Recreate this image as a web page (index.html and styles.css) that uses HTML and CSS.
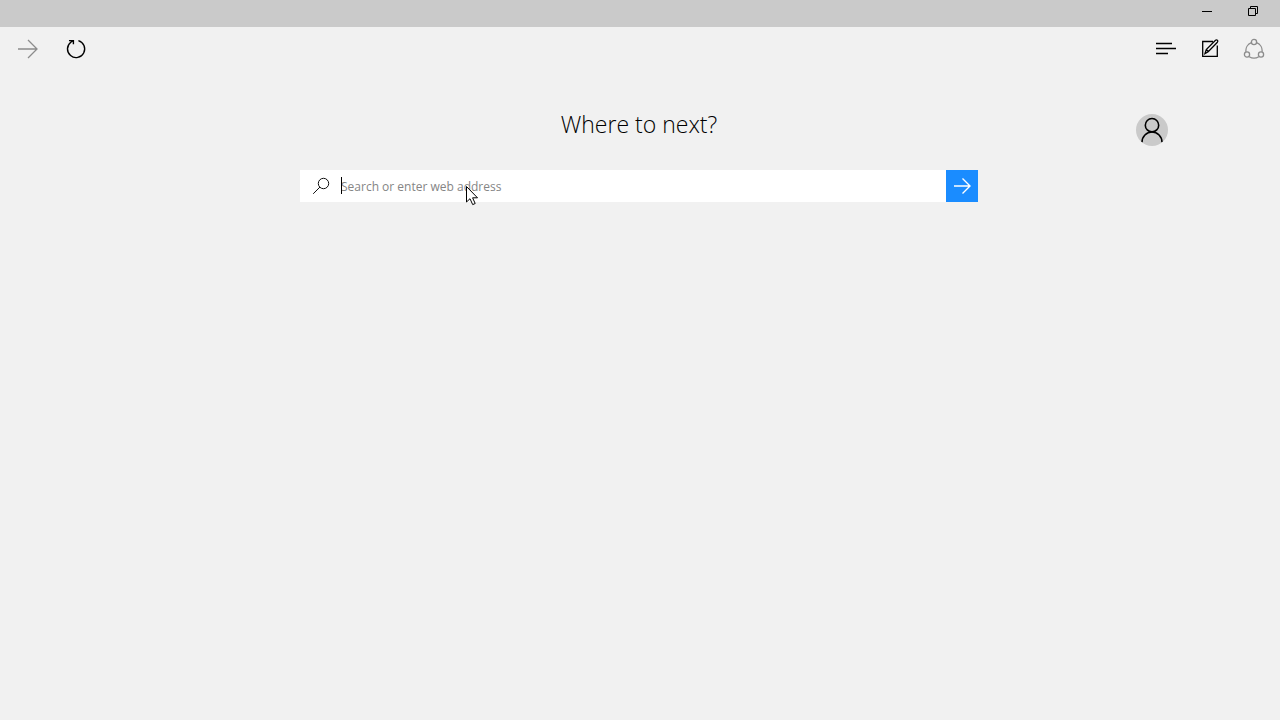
FILE: index.html
```html
<!DOCTYPE html>
<html lang="en">
<head>
<meta charset="utf-8">
<meta name="viewport" content="width=device-width, initial-scale=1">
<title>New tab</title>
<link rel="stylesheet" href="styles.css">
</head>
<body>
<header>
  <div class="titlebar">
    <button class="window-button" type="button" aria-label="Minimize">
      <svg width="12" height="12" viewBox="0 0 12 12"><path d="M1 6.500h10"/></svg>
    </button>
    <button class="window-button" type="button" aria-label="Restore">
      <svg width="12" height="12" viewBox="0 0 12 12"><path d="M1.500 3.500h7v7h-7zM3.500 3.500v-2h7v7h-2"/></svg>
    </button>
  </div>
  <nav class="toolbar" aria-label="Browser">
    <div class="nav-group">
      <button class="nav-button muted" type="button" aria-label="Forward">
        <svg width="22" height="22" viewBox="0 0 22 22"><path stroke-width="1.300" d="M1 11h19M11 2l9 9-9 9"/></svg>
      </button>
      <button class="nav-button" type="button" aria-label="Refresh">
        <svg width="22" height="22" viewBox="0 0 22 22"><path stroke-width="1.400" d="M13.400 2.700A8.600 8.600 0 1 1 5.800 4.200L8 2.700M4 2.600h4.400v3.600"/></svg>
      </button>
    </div>
    <div class="tool-group">
      <button class="tool-button" type="button" aria-label="Hub">
        <svg width="22" height="22" viewBox="0 0 22 22"><path stroke-width="1.400" d="M1 5.500h16M1 10.500h20M1 15.500h12"/></svg>
      </button>
      <button class="tool-button" type="button" aria-label="Make a web note">
        <svg width="22" height="22" viewBox="0 0 22 22"><path stroke-width="1.300" d="M14 3.500H3.700v14.800h14.600V7.500M6 15.500l1.300-4L16.500 2.300q1-.8 1.900 0t0 1.900L9.200 13.700zM7.300 11.500l2.200 2.100"/></svg>
      </button>
      <button class="tool-button muted" type="button" aria-label="Share">
        <svg width="22" height="22" viewBox="0 0 22 22"><g stroke-width="1.300"><circle cx="11" cy="4" r="2.600"/><circle cx="4" cy="16.500" r="2.600"/><circle cx="18" cy="16.500" r="2.600"/><path d="M8.400 4.700A8.500 8.500 0 0 0 3 13.900M13.600 4.700A8.500 8.500 0 0 1 19 13.900M6.200 18.700a9 9 0 0 0 9.600 0"/></g></svg>
      </button>
    </div>
  </nav>
</header>
<main class="start">
  <div class="start-center">
    <h1>Where to next?</h1>
    <form class="search" role="search">
      <label class="search-icon" for="address" aria-label="Search or enter web address">
        <svg width="18" height="18" viewBox="0 0 18 18"><circle cx="11.500" cy="6.500" r="5.200"/><path d="M8 10l-6.800 6.800"/></svg>
      </label>
      <div class="field">
        <input id="address" type="text" placeholder="Search or enter web address">
        <span class="caret"></span>
        <svg class="pointer" width="13" height="20" viewBox="0 0 13 20"><path d="M.5.500v15.500l3.500-3.300 2.700 5.900 2.500-1.100-2.600-5.700h4.900z"/></svg>
      </div>
      <button class="go" type="button" aria-label="Go">
        <svg width="20" height="20" viewBox="0 0 20 20"><path stroke-width="1.400" d="M2 10h16M10.500 2.500L18 10l-7.500 7.500"/></svg>
      </button>
    </form>
  </div>
  <button class="profile" type="button" aria-label="Profile">
    <svg width="32" height="32" viewBox="0 0 32 32"><circle cx="16" cy="11.200" r="6.700"/><path d="M6 28.300a10 10.300 0 0 1 20 0"/></svg>
  </button>
</main>
</body>
</html>
```
FILE: styles.css
```css
* {
  box-sizing: border-box;
}

body {
  margin: 0;
  min-height: 100vh;
  background: #f1f1f1;
  color: #000;
  font-family: "Open Sans", "Noto Sans", sans-serif;
}

button {
  display: flex;
  align-items: center;
  justify-content: center;
  padding: 0;
  border: 0;
  background: transparent;
  color: inherit;
}

svg {
  display: block;
  fill: none;
  stroke: currentColor;
}

.titlebar {
  display: flex;
  justify-content: flex-end;
  height: 27px;
  padding: 0 4px 5px 0;
  background: #cacaca;
}

.window-button {
  width: 46px;
}

.toolbar {
  display: flex;
  justify-content: space-between;
  height: 44px;
  padding: 0 4px;
}

.nav-group,
.tool-group {
  display: flex;
}

.nav-button {
  width: 48px;
}

.tool-button {
  width: 44px;
}

.muted {
  color: #8c8c8c;
}

.start {
  display: grid;
  grid-template-columns: 1fr minmax(0, 678px) 1fr;
  padding: 35px 112px 0 110px;
}

.start-center {
  grid-column: 2;
}

h1 {
  margin: 0 0 28px;
  font-size: 23px;
  font-weight: 300;
  line-height: 36px;
  text-align: center;
}

.search {
  display: flex;
  height: 32px;
  background: #fff;
}

.search-icon {
  display: flex;
  align-items: center;
  justify-content: center;
  width: 41px;
  color: #111;
}

.field {
  position: relative;
  flex: 1;
}

input {
  width: 100%;
  height: 32px;
  padding: 0;
  border: 0;
  outline: 0;
  background: transparent;
  font-family: "Open Sans", "Noto Sans", sans-serif;
  font-size: 12px;
}

input::placeholder {
  color: #858585;
  opacity: 1;
}

.caret {
  position: absolute;
  top: 7px;
  left: 0;
  width: 1px;
  height: 17px;
  background: #000;
}

.pointer {
  position: absolute;
  top: 16px;
  left: 125px;
  fill: #fff;
  stroke: #000;
}

.go {
  width: 32px;
  background: #1a8cff;
  color: #fff;
}

.profile {
  justify-self: end;
  width: 32px;
  height: 32px;
  margin-top: 8px;
  overflow: hidden;
  border-radius: 50%;
  background: #cacaca;
  stroke-width: 1.6;
}
```
